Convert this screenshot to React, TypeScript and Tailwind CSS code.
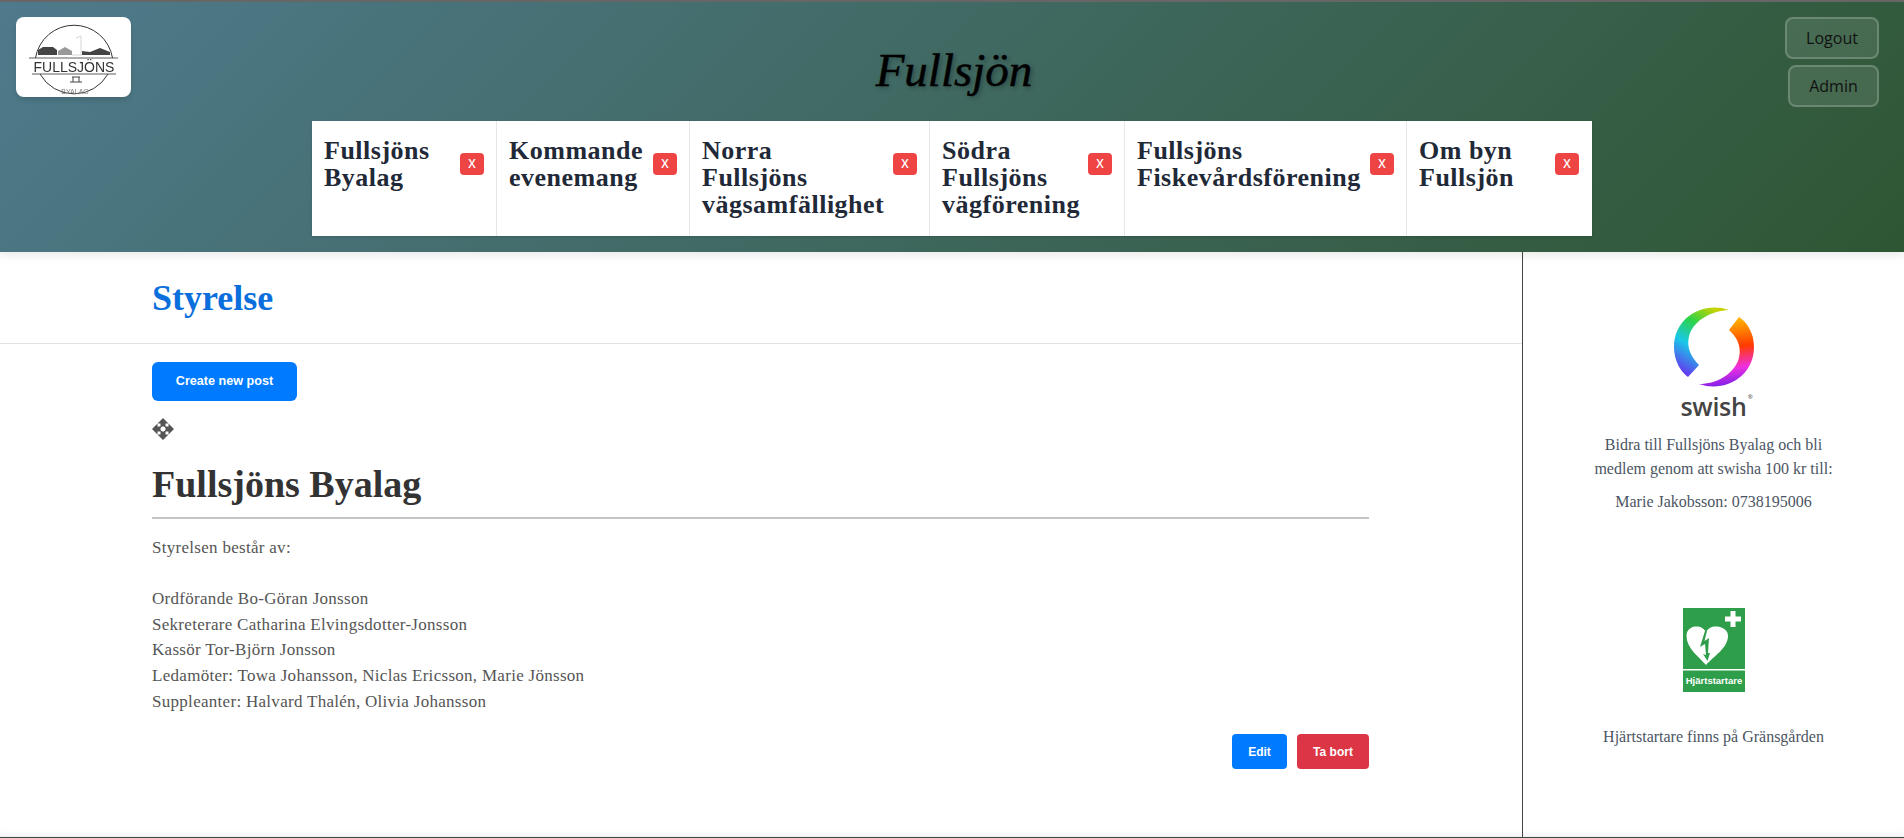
import { Fragment } from 'react';

const navItems = [
  { lines: ['Fullsjöns', 'Byalag'], cls: 'w-[185px]' },
  { lines: ['Kommande', 'evenemang'], cls: 'w-[193px]' },
  { lines: ['Norra', 'Fullsjöns', 'vägsamfällighet'], cls: 'w-[240px]' },
  { lines: ['Södra', 'Fullsjöns', 'vägförening'], cls: 'w-[195px]' },
  { lines: ['Fullsjöns', 'Fiskevårdsförening'], cls: 'w-[282px]' },
  { lines: ['Om byn', 'Fullsjön'], cls: 'w-[185px] pr-[13px]' },
];

const Logo = () => (
  <svg viewBox="0 0 115 80" className="h-full w-full blur-[0.3px]">
    <path d="M19.5 41 A 39 39 0 0 1 96.5 41" fill="none" stroke="#333" strokeWidth="1" />
    <path d="M24 57 A 39 39 0 0 0 92 57" fill="none" stroke="#333" strokeWidth="1" />
    <path d="M22 38 v-5 l5 -3 h10 l4 3 v5z" fill="#444" />
    <path d="M42 38 v-4 l7 -4 l7 4 v4z" fill="#999" />
    <path d="M66 38 v-4 l8 1 l10 -4 l10 4 v3z" fill="#444" />
    <path d="M56 38 H66 M65 38 V19 L60 21" fill="none" stroke="#ccc" strokeWidth="0.8" />
    <line x1="13" y1="41" x2="102" y2="41" stroke="#333" strokeWidth="0.8" />
    <line x1="16" y1="57" x2="100" y2="57" stroke="#333" strokeWidth="0.8" />
    <text x="58" y="55" textAnchor="middle" fontFamily="Liberation Sans, sans-serif" fontSize="14" fill="#333">FULLSJÖNS</text>
    <path d="M56 60 H64 M57 60 v5 M63 60 v5 M54 65 h12" fill="none" stroke="#444" strokeWidth="1" />
    <text x="59" y="77" textAnchor="middle" fontFamily="Liberation Sans, sans-serif" fontSize="7" fill="#777">BYALAG</text>
  </svg>
);

const SwishLogo = () => (
  <svg viewBox="0 0 80 80" className="h-20 w-20">
    <defs>
      <linearGradient id="swishLeft" x1="0.7" y1="0" x2="0.2" y2="1">
        <stop offset="0" stopColor="#c8d400" />
        <stop offset="0.3" stopColor="#2bd34a" />
        <stop offset="0.6" stopColor="#19c8e8" />
        <stop offset="1" stopColor="#6a2cf0" />
      </linearGradient>
      <linearGradient id="swishRight" x1="0.4" y1="0" x2="0.5" y2="1">
        <stop offset="0" stopColor="#ffc400" />
        <stop offset="0.45" stopColor="#ff3b00" />
        <stop offset="0.75" stopColor="#ef2fe0" />
        <stop offset="1" stopColor="#7a20e8" />
      </linearGradient>
    </defs>
    <path d="M55 3 C 30 -6 0 10 0 40 C 0 54 7 65 14 70 L 25 58 C 15 48 12 38 16 26 C 22 12 38 4 55 3 Z" fill="url(#swishLeft)" />
    <path d="M25 77 C 50 86 80 70 80 40 C 80 26 73 15 65 10 L 55 23 C 65 32 68 42 64 54 C 58 68 42 77 25 77 Z" fill="url(#swishRight)" />
  </svg>
);

const AedSign = () => (
  <svg viewBox="0 0 62 84" className="h-[84px] w-[62px]">
    <rect width="62" height="84" fill="#2f9e4a" />
    <path d="M47.5 3 h5 v5.5 h5.5 v5 h-5.5 v5.5 h-5 v-5.5 h-5.5 v-5 h5.5z" fill="#fff" />
    <path d="M23 57 C 15 48 3.5 40 3.5 28 C 3.5 21 9 18.5 13 18.5 C 18 18.5 21 20.5 23 24 C 25 20.5 28 18.5 33 18.5 C 38 18.5 45 21 45 28 C 45 40 31 48 23 57Z" fill="#fff" />
    <path d="M22 23 L17 39 L22 36 L23 47 L20 46 L24.5 53 L27 45 L25 45 L26 30 L21.5 33 L24 23Z" fill="#2f9e4a" />
    <rect x="0" y="61" width="62" height="1.5" fill="#fff" />
    <text x="31" y="76" textAnchor="middle" fontFamily="Liberation Sans, sans-serif" fontSize="9.5" fontWeight="700" fill="#fff">Hjärtstartare</text>
  </svg>
);

const MoveIcon = () => (
  <svg viewBox="0 0 22 22" className="h-[22px] w-[22px]" fill="#555">
    <path d="M11 0 L16.5 5.5 H13.5 V9 H8.5 V5.5 H5.5Z" />
    <path d="M11 22 L16.5 16.5 H13.5 V13 H8.5 V16.5 H5.5Z" />
    <path d="M0 11 L5.5 5.5 V8.5 H9 V13.5 H5.5 V16.5Z" />
    <path d="M22 11 L16.5 5.5 V8.5 H13 V13.5 H16.5 V16.5Z" />
    <path d="M11 8 L14 11 L11 14 L8 11Z" fill="#fff" />
  </svg>
);

export default function App() {
  return (
    <div className="h-[838px] overflow-hidden bg-white font-['Liberation_Serif',serif] text-[#555]">
      {/* Header */}
      <header className="relative z-10 flex h-[252px] flex-col items-center border-t-2 border-[#666] bg-[linear-gradient(135deg,#4f7a8c_0%,#2f5633_100%)] shadow-[0_4px_8px_rgba(0,0,0,0.08)]">
        <div className="absolute left-4 top-[15px] h-20 w-[115px] rounded-lg bg-white shadow-md">
          <Logo />
        </div>
        <div className="absolute right-[25px] top-[15px] flex flex-col items-end gap-[6px] font-['Open_Sans',sans-serif] text-base text-[#111]">
          <button className="h-[42px] w-[94px] rounded-lg border-2 border-white/20 bg-white/10">Logout</button>
          <button className="h-[42px] w-[91px] rounded-lg border-2 border-white/20 bg-white/10">Admin</button>
        </div>
        <h1 className="mt-[38px] ml-[4px] h-[81px] text-[47px] leading-[60px] italic text-black [-webkit-text-stroke:0.5px_black] [text-shadow:2px_2px_4px_rgba(0,0,0,0.3)]">Fullsjön</h1>
        <nav className="flex h-[115px] w-[1280px] bg-white shadow-sm">
          {navItems.map((item, i) => (
            <div key={i} className={`flex items-start justify-between border-r border-[#e5e7eb] px-3 pt-[16px] last:border-r-0 ${item.cls}`}>
              <span className="text-[26px] leading-[27px] font-bold tracking-[0.5px] text-[#1f2937]">
                {item.lines.map((l, j) => (
                  <Fragment key={j}>
                    {l}
                    {j < item.lines.length - 1 && <br />}
                  </Fragment>
                ))}
              </span>
              <button className="mt-[16px] h-[22px] w-6 shrink-0 rounded bg-[#ef4444] font-['Open_Sans',sans-serif] text-xs font-semibold text-white">X</button>
            </div>
          ))}
        </nav>
      </header>

      {/* Main */}
      <div className="flex h-[586px] border-b border-[#3a4a3e] shadow-[inset_0_-6px_6px_-4px_rgba(0,0,0,0.08)]">
        <main className="w-[1523px] border-r border-[#444]">
          <div className="flex h-[92px] items-center border-b border-[#e2e2e2] pl-[152px]">
            <h2 className="text-[36px] font-bold text-[#0a6fdc]">Styrelse</h2>
          </div>
          <div className="w-[1369px] pl-[152px]">
            <button className="mt-[18px] block h-[39px] w-[145px] rounded-md bg-[#007bff] font-['Liberation_Sans',sans-serif] text-[12.6px] font-bold text-white">Create new post</button>
            <div className="mt-[17px]">
              <MoveIcon />
            </div>
            <h3 className="mt-[19px] border-b-2 border-[#c4c4c4] pb-[8px] text-[38px] leading-[50px] font-bold text-[#333]">Fullsjöns Byalag</h3>
            <div className="mt-[16px] text-[17px] leading-[25.6px] tracking-[0.29px]">
              <p>Styrelsen består av:</p>
              <p>&nbsp;</p>
              <p>Ordförande Bo-Göran Jonsson</p>
              <p>Sekreterare Catharina Elvingsdotter-Jonsson</p>
              <p>Kassör Tor-Björn Jonsson</p>
              <p>Ledamöter: Towa Johansson, Niclas Ericsson, Marie Jönsson</p>
              <p>Suppleanter: Halvard Thalén, Olivia Johansson</p>
            </div>
            <div className="mt-[20px] flex justify-end gap-[10px] font-['Liberation_Sans',sans-serif] text-xs font-bold text-white">
              <button className="h-[35px] w-[55px] rounded bg-[#007bff]">Edit</button>
              <button className="h-[35px] w-[72px] rounded bg-[#dc3545]">Ta bort</button>
            </div>
          </div>
        </main>
        <aside className="flex flex-1 flex-col items-center pt-[55px] text-center text-base text-[#4b5563]">
          <SwishLogo />
          <div className="relative mt-[4px] font-['Open_Sans',sans-serif] text-[25px] leading-[30px] font-semibold tracking-[-0.3px] text-[#444]">
            swish
            <span className="absolute -right-[6px] top-[2px] text-[6px] leading-[8px] font-normal">®</span>
          </div>
          <p className="mt-[12px] leading-[24px]">Bidra till Fullsjöns Byalag och bli<br />medlem genom att swisha 100 kr till:</p>
          <p className="mt-[9px] leading-[24px]">Marie Jakobsson: 0738195006</p>
          <div className="mt-[94px]"><AedSign /></div>
          <p className="mt-[33px] leading-[24px]">Hjärtstartare finns på Gränsgården</p>
        </aside>
      </div>
    </div>
  );
}
